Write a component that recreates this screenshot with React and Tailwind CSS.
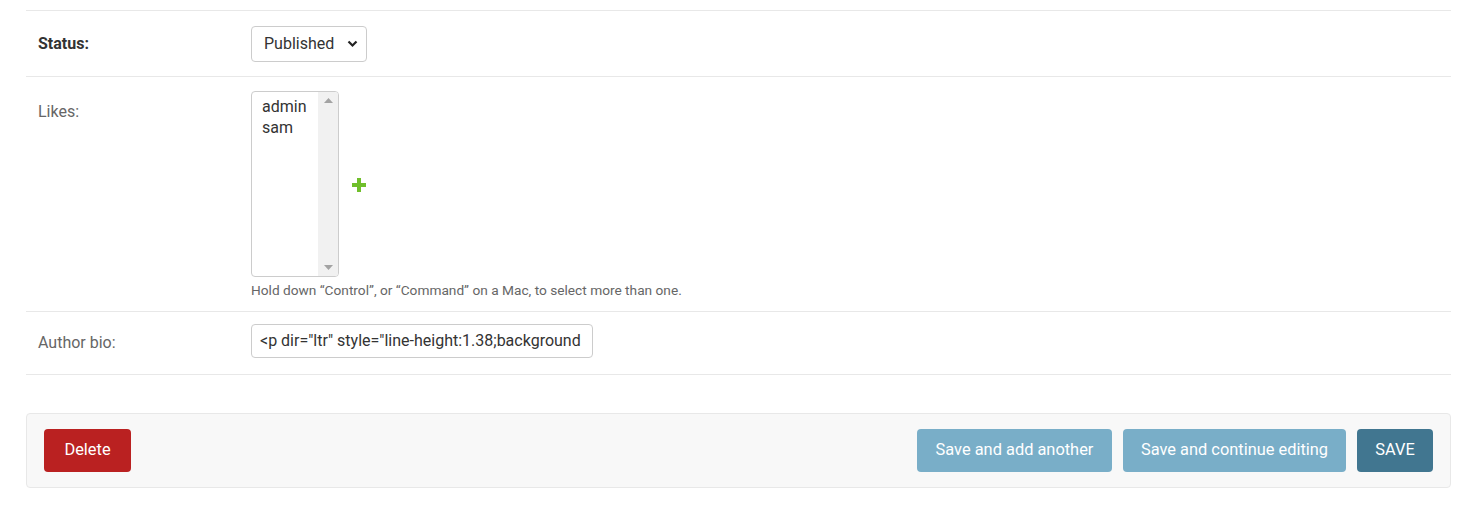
import React from 'react';

const font = { fontFamily: 'Roboto, "Liberation Sans", sans-serif' };

function Row({ label, bold, children, className = '' }) {
    return (
        <div className={`flex border-b border-[#e8e8e8] ${className}`}>
            <div className={`w-[225px] shrink-0 pl-3 text-[16px] ${bold ? 'font-bold text-[#333]' : 'text-[#666]'}`}>
                {label}
            </div>
            <div className="flex-1">{children}</div>
        </div>
    );
}

function PlusIcon() {
    return (
        <svg width="14" height="14" viewBox="0 0 14 14" className="block">
            <rect x="5" y="0" width="4" height="14" fill="#70bf2b" />
            <rect x="0" y="5" width="14" height="4" fill="#70bf2b" />
        </svg>
    );
}

export default function App() {
    return (
        <div className="min-h-screen bg-white pt-[10px]" style={font}>
            <div className="ml-[26px] w-[1425px]">
                <div className="border-t border-[#e8e8e8]">
                    {/* Status */}
                    <Row label="Status:" bold className="h-[66px] items-center">
                        <div className="relative inline-flex h-[36px] w-[116px] items-center rounded-[4px] border border-[#cccccc] pl-[12px] text-[16px] text-[#333]">
                            Published
                            <svg className="absolute right-[8px] top-[13px]" width="11" height="8" viewBox="0 0 11 8">
                                <path d="M1.5 1.5 L5.5 5.5 L9.5 1.5" stroke="#222" strokeWidth="2.2" fill="none" />
                            </svg>
                        </div>
                    </Row>

                    {/* Likes */}
                    <Row label="Likes:" className="pt-[23px] pb-[12px]">
                        <div className="-mt-[9px] flex items-center">
                            <div className="flex h-[186px] w-[88px] overflow-hidden rounded-[4px] border border-[#cccccc]">
                                <div className="flex-1 pl-[10px] pt-[4px] text-[16px] leading-[21px] text-[#333]">
                                    <div>admin</div>
                                    <div>sam</div>
                                </div>
                                <div className="flex w-[20px] flex-col items-center justify-between bg-[#f1f1f1] py-[6px]">
                                    <svg width="9" height="5" viewBox="0 0 9 5"><path d="M0 5 L4.5 0 L9 5 Z" fill="#a3a3a3" /></svg>
                                    <svg width="9" height="5" viewBox="0 0 9 5"><path d="M0 0 L4.5 5 L9 0 Z" fill="#a3a3a3" /></svg>
                                </div>
                            </div>
                            <div className="ml-[13px] mt-[2px]">
                                <PlusIcon />
                            </div>
                        </div>
                        <p className="mt-[4px] text-[13.7px] leading-[18px] text-[#666]">
                            Hold down “Control”, or “Command” on a Mac, to select more than one.
                        </p>
                    </Row>

                    {/* Author bio */}
                    <Row label="Author bio:" className="h-[63px] items-center">
                        <div className="-mt-[4px] flex h-[34px] w-[342px] items-center overflow-hidden whitespace-nowrap rounded-[4px] border border-[#cccccc] px-[8px] text-[16px] text-[#333]">
                            &lt;p dir="ltr" style="line-height:1.38;background
                        </div>
                    </Row>
                </div>

                {/* Submit row */}
                <div className="mt-[38px] flex h-[75px] items-center justify-between rounded-[4px] border border-[#e8e8e8] bg-[#f8f8f8] px-[17px]">
                    <button className="h-[43px] w-[87px] rounded-[4px] bg-[#ba2121] text-[16.4px] text-white">
                        Delete
                    </button>
                    <div className="flex items-center gap-[11px]">
                        <button className="h-[43px] w-[195px] rounded-[4px] bg-[#79aec8] text-[16.4px] text-white">
                            Save and add another
                        </button>
                        <button className="h-[43px] w-[223px] rounded-[4px] bg-[#79aec8] text-[16.4px] text-white">
                            Save and continue editing
                        </button>
                        <button className="h-[43px] w-[76px] rounded-[4px] bg-[#417690] text-[16.4px] text-white">
                            SAVE
                        </button>
                    </div>
                </div>
            </div>
        </div>
    );
}
